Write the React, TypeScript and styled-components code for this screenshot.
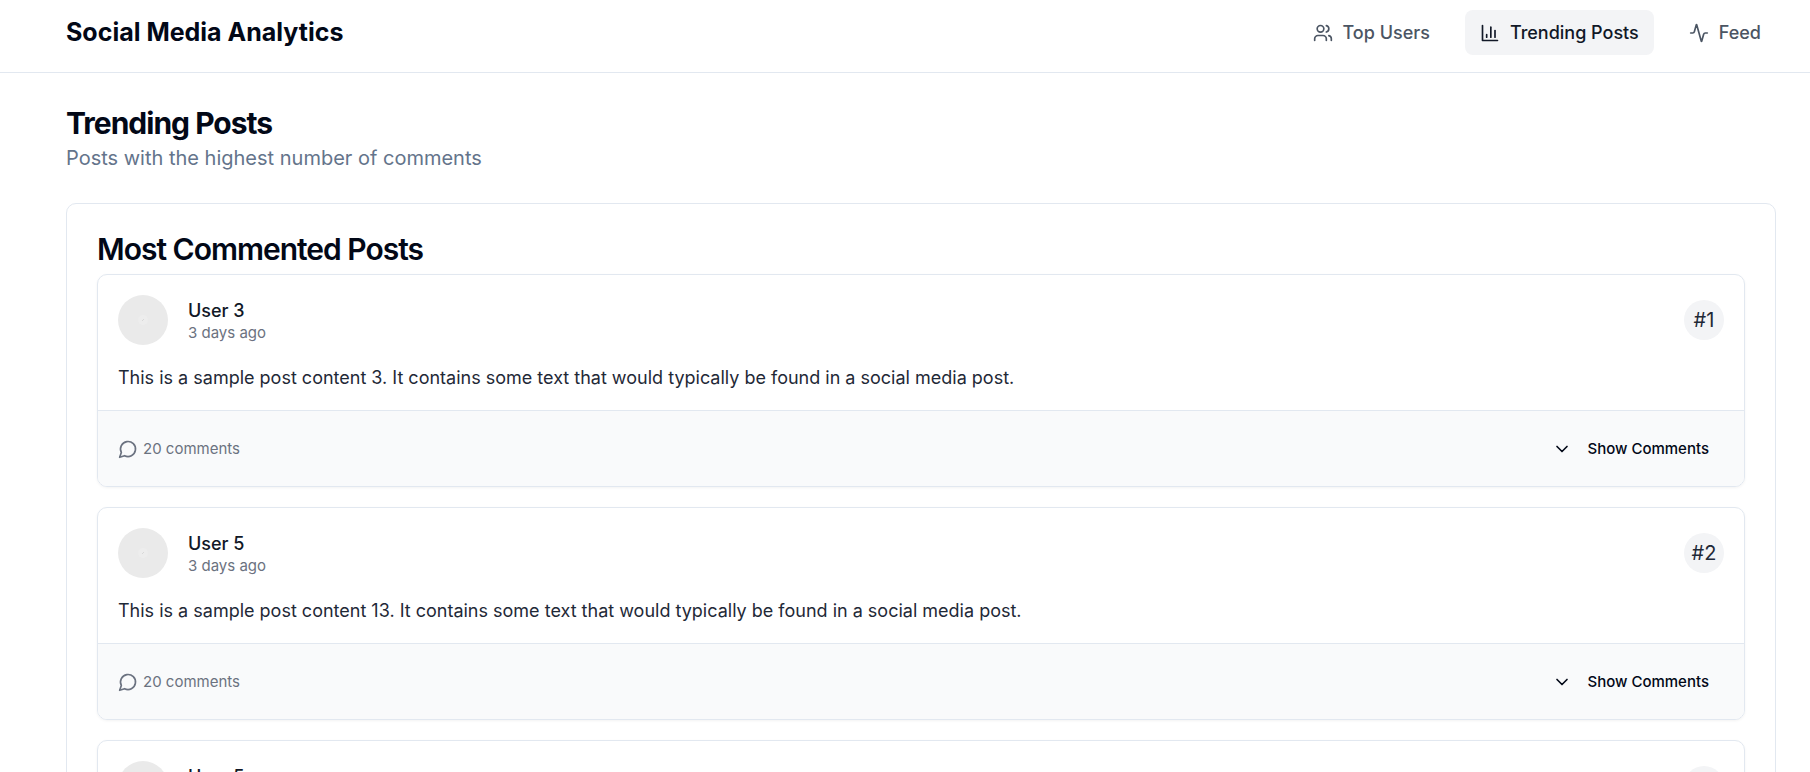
import React from "react";
import styled, { createGlobalStyle } from "styled-components";

const GlobalStyle = createGlobalStyle`
  *, *::before, *::after { box-sizing: border-box; }
  body {
    margin: 0;
    background: #ffffff;
    color: #020817;
    font-family: Inter, "Liberation Sans", sans-serif;
    font-size: 20px;
    line-height: 30px;
  }
  h1, h2, h3, p { margin: 0; }
`;

const Page = styled.div`
  min-height: 100vh;
`;

const Header = styled.header`
  display: flex;
  align-items: center;
  justify-content: space-between;
  padding: 10px 34px 17px 66px;
  border-bottom: 1px solid #e2e8f0;
`;

const Brand = styled.h1`
  font-size: 25px;
  line-height: 35px;
  font-weight: 700;
`;

const Nav = styled.nav`
  display: flex;
  gap: 20px;
`;

const NavLink = styled.a<{ $active?: boolean }>`
  display: flex;
  align-items: center;
  gap: 10px;
  padding: 10px 15px;
  border-radius: 8px;
  font-size: 18px;
  line-height: 25px;
  font-weight: 500;
  text-decoration: none;
  color: ${(p) => (p.$active ? "#111827" : "#4b5563")};
  background: ${(p) => (p.$active ? "#f3f4f6" : "transparent")};
`;

const Main = styled.main`
  padding: 30px 34px 30px 66px;
`;

const PageTitle = styled.h2`
  font-size: 30px;
  line-height: 40px;
  font-weight: 700;
  letter-spacing: -1px;
`;

const Subtitle = styled.p`
  color: #64748b;
`;

const Panel = styled.section`
  margin-top: 30px;
  padding: 30px;
  border: 1px solid #e2e8f0;
  border-radius: 10px;
`;

const PanelTitle = styled.h2`
  margin-bottom: 10px;
  font-size: 30px;
  line-height: 30px;
  font-weight: 600;
  letter-spacing: -1px;
`;

const PostList = styled.div`
  display: flex;
  flex-direction: column;
  gap: 20px;
`;

const PostCard = styled.article`
  overflow: hidden;
  border: 1px solid #e2e8f0;
  border-radius: 10px;
  box-shadow: 0 1px 3px rgba(0, 0, 0, 0.05);
`;

const PostBody = styled.div`
  padding: 20px;
`;

const PostHead = styled.div`
  display: flex;
  align-items: center;
  gap: 20px;
  margin-bottom: 20px;
`;

const AvatarIcon = styled.svg`
  display: block;
  width: 50px;
  height: 50px;
`;

const Author = styled.div`
  flex: 1;
`;

const AuthorName = styled.h3`
  font-size: 18px;
  line-height: 25px;
  font-weight: 500;
  color: #111827;
`;

const PostTime = styled.p`
  font-size: 15px;
  line-height: 20px;
  color: #6b7280;
`;

const Rank = styled.span`
  display: flex;
  align-items: center;
  justify-content: center;
  width: 40px;
  height: 40px;
  border-radius: 50%;
  background: #f3f4f6;
  color: #1f2937;
`;

const PostText = styled.p`
  font-size: 18px;
  line-height: 25px;
  color: #1f2937;
`;

const PostFooter = styled.footer`
  display: flex;
  align-items: center;
  justify-content: space-between;
  padding: 15px 20px;
  border-top: 1px solid #e2e8f0;
  background: #f9fafb;
`;

const CommentCount = styled.div`
  display: flex;
  align-items: center;
  gap: 5px;
  font-size: 15px;
  line-height: 20px;
  color: #6b7280;
`;

const ToggleButton = styled.button`
  display: flex;
  align-items: center;
  gap: 15px;
  height: 45px;
  padding: 0 15px;
  border: 0;
  border-radius: 8px;
  background: transparent;
  color: #020817;
  font-family: inherit;
  font-size: 15px;
  line-height: 20px;
  font-weight: 500;
  cursor: pointer;
`;

const IconSvg = styled.svg`
  display: block;
  flex: none;
  width: 20px;
  height: 20px;
  fill: none;
  stroke: currentColor;
  stroke-width: 2;
  stroke-linecap: round;
  stroke-linejoin: round;
`;

const icons = {
  users: [
    "M16 21v-2a4 4 0 0 0-4-4H6a4 4 0 0 0-4 4v2",
    "M9 3a4 4 0 1 0 0 8a4 4 0 1 0 0-8",
    "M22 21v-2a4 4 0 0 0-3-3.87",
    "M16 3.13a4 4 0 0 1 0 7.75",
  ],
  chart: ["M3 3v18h18", "M18 17V9", "M13 17V5", "M8 17v-3"],
  activity: [
    "M22 12h-2.48a2 2 0 0 0-1.93 1.46l-2.35 8.36a.25.25 0 0 1-.48 0L9.24 2.18a.25.25 0 0 0-.48 0l-2.35 8.36A2 2 0 0 1 4.49 12H2",
  ],
  message: ["M7.9 20A9 9 0 1 0 4 16.1L2 22Z"],
  chevron: ["m6 9 6 6 6-6"],
};

function Icon({ name }: { name: keyof typeof icons }) {
  return (
    <IconSvg viewBox="0 0 24 24" aria-hidden="true">
      {icons[name].map((d) => (
        <path key={d} d={d} />
      ))}
    </IconSvg>
  );
}

function Avatar() {
  return (
    <AvatarIcon viewBox="0 0 50 50" aria-hidden="true">
      <circle cx="25" cy="25" r="25" fill="#eaeaea" />
      <circle cx="25" cy="25" r="5" fill="#ededed" />
      <path d="M24.5 25.5l1-1" stroke="#c4c4c4" strokeWidth="1" />
    </AvatarIcon>
  );
}

interface Post {
  id: number;
  user: string;
  time: string;
  comments: number;
}

const posts: Post[] = [
  { id: 3, user: "User 3", time: "3 days ago", comments: 20 },
  { id: 13, user: "User 5", time: "3 days ago", comments: 20 },
  { id: 15, user: "User 5", time: "3 days ago", comments: 20 },
];

function PostItem({ post, rank }: { post: Post; rank: number }) {
  return (
    <PostCard>
      <PostBody>
        <PostHead>
          <Avatar />
          <Author>
            <AuthorName>{post.user}</AuthorName>
            <PostTime>{post.time}</PostTime>
          </Author>
          <Rank>#{rank}</Rank>
        </PostHead>
        <PostText>
          {`This is a sample post content ${post.id}. It contains some text that would typically be found in a social media post.`}
        </PostText>
      </PostBody>
      <PostFooter>
        <CommentCount>
          <Icon name="message" />
          <span>{post.comments} comments</span>
        </CommentCount>
        <ToggleButton type="button">
          <Icon name="chevron" />
          Show Comments
        </ToggleButton>
      </PostFooter>
    </PostCard>
  );
}

export default function App() {
  return (
    <Page>
      <GlobalStyle />
      <Header>
        <Brand>Social Media Analytics</Brand>
        <Nav>
          <NavLink href="#users">
            <Icon name="users" />
            Top Users
          </NavLink>
          <NavLink href="#trending" $active aria-current="page">
            <Icon name="chart" />
            Trending Posts
          </NavLink>
          <NavLink href="#feed">
            <Icon name="activity" />
            Feed
          </NavLink>
        </Nav>
      </Header>
      <Main>
        <PageTitle>Trending Posts</PageTitle>
        <Subtitle>Posts with the highest number of comments</Subtitle>
        <Panel>
          <PanelTitle>Most Commented Posts</PanelTitle>
          <PostList>
            {posts.map((post, index) => (
              <PostItem key={post.id} post={post} rank={index + 1} />
            ))}
          </PostList>
        </Panel>
      </Main>
    </Page>
  );
}
